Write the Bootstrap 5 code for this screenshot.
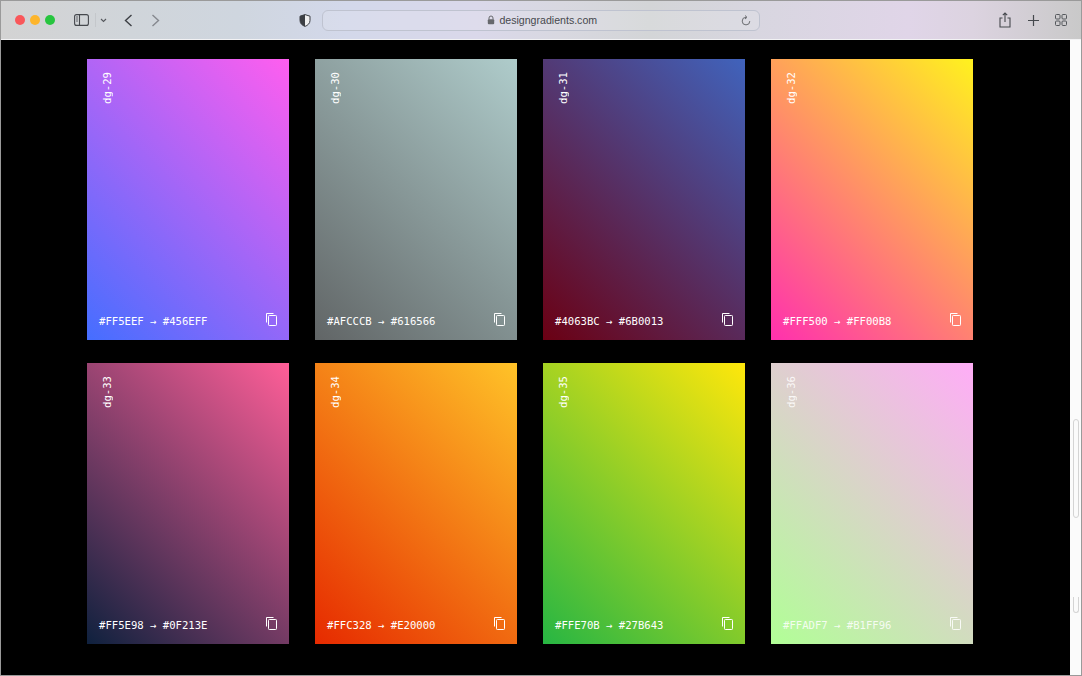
<!DOCTYPE html>
<html lang="en">
<head>
<meta charset="utf-8">
<title>designgradients.com</title>
<link href="https://cdn.jsdelivr.net/npm/bootstrap@5.3.0/dist/css/bootstrap.min.css" rel="stylesheet">
<style>
html,body{height:100%;margin:0;overflow:hidden;background:#fff}
.win{width:1082px;height:676px;border:1px solid #9a9a9a;display:flex;flex-direction:column;overflow:hidden;background:#fbfbfb}
.tb{height:39px;flex:none;border-bottom:1px solid #f2f2f4;background:linear-gradient(90deg,#d3d3d3 0,#d0d5da 12%,#cfd6df 22%,#d3d8ea 32%,#dad8ea 44%,#d8d8e0 52%,#d3d5d7 60%,#d8d6e0 70%,#e0d5e8 84%,#dcd3e0 90%,#c9c9c9 100%);color:#3c3f44}
.lights{display:flex;gap:5.2px;margin-left:14px}
.dot{width:10px;height:10px;border-radius:50%}
.d1{background:#f9575a}.d2{background:#fdb52c}.d3{background:#27c53f}
.i-side{margin-left:19px}
.sep{width:1px;height:14px;background:#c4c7cb;margin-left:6px}
.i-chev{margin-left:4px}
.i-back{margin-left:17px}
.i-fwd{margin-left:18px}
.i-shield{margin-left:139px}
.addr{width:438px;height:21px;margin-left:11px;border:1px solid #bfc3d0;border-radius:6px;background:rgba(255,255,255,.12);font:10.6px "Liberation Sans",Arial,sans-serif;color:#47494d;padding-left:164px}
.i-share{margin-left:239px}
.i-plus{margin-left:17px}
.i-grid{margin-left:16px}
.mainarea{flex:1;min-height:0}
.pagecv{flex:1;background:#000;padding:19px 0 0 86px}
.gridcv{display:grid;grid-template-columns:repeat(4,202px);grid-auto-rows:281px;column-gap:26px;row-gap:23px}
.sw{padding:13px 12px 13px 12px;color:#fff;font:10.6px "DejaVu Sans Mono","Liberation Mono",monospace}
.sw.faded{color:rgba(255,255,255,.85)}
.vt{writing-mode:vertical-rl;transform:rotate(180deg);align-self:flex-start;line-height:14px;margin-left:1px}
.cpy{margin-bottom:1px}
.sbar{width:11px;flex:none;background:#fbfbfb;padding-left:3px}
.thumb{width:6px;border:1px solid #d4d4d4;border-radius:3px}
.t1{height:99px;margin-top:379px}
.t2{height:16px;margin-top:79px;border-top:0;border-radius:0 0 3px 3px}
svg{display:block;flex:none}
</style>
</head>
<body>
<div class="win">
  <div class="tb d-flex align-items-center">
    <div class="lights"><span class="dot d1"></span><span class="dot d2"></span><span class="dot d3"></span></div>
    <svg class="i-side" width="15" height="12" viewBox="0 0 15 12" fill="none" stroke="#45484d" stroke-width="1.1"><rect x=".6" y=".6" width="13.800" height="10.800" rx="2"/><path d="M5.500 .6v10.800"/><path d="M2 3h2M2 5h2M2 7h2" stroke-width=".8"/></svg>
    <span class="sep"></span>
    <svg class="i-chev" width="7" height="5" viewBox="0 0 7 5" fill="none" stroke="#55585d" stroke-width="1.1"><path d="M1 1l2.500 2.500L6 1"/></svg>
    <svg class="i-back" width="9" height="13" viewBox="0 0 9 13" fill="none" stroke="#3c3f44" stroke-width="1.4"><path d="M7.500 1L1.500 6.500l6 5.500"/></svg>
    <svg class="i-fwd" width="9" height="13" viewBox="0 0 9 13" fill="none" stroke="#85888e" stroke-width="1.4"><path d="M1.500 1l6 5.500-6 5.500"/></svg>
    <svg class="i-shield" width="12" height="13" viewBox="0 0 12 13"><path d="M6 .6l5 1.600v4.300c0 3-2.300 4.900-5 5.900-2.700-1-5-2.900-5-5.900V2.200z" fill="#f0f0f0" stroke="#3c3f44" stroke-width="1"/><path d="M6 .6L1 2.200v4.300c0 3 2.300 4.900 5 5.900z" fill="#3c3f44"/></svg>
    <div class="addr d-flex align-items-center">
      <svg width="8" height="10" viewBox="0 0 8 10" class="me-1"><path d="M2 4.500V3a2 2 0 0 1 4 0v1.500" fill="none" stroke="#66686c" stroke-width="1"/><rect x=".8" y="4.300" width="6.400" height="5" rx="1" fill="#66686c"/></svg>
      <span>designgradients.com</span>
      <svg class="ms-auto me-2" width="10" height="11" viewBox="0 0 10 11" fill="none" stroke="#6a6c70" stroke-width="1"><path d="M5 2.300a3.800 3.800 0 1 0 3.800 3.800"/><path d="M4 .5l2 1.800-2 1.700" /></svg>
    </div>
    <svg class="i-share" width="12" height="16" viewBox="0 0 12 16" fill="none" stroke="#45484d" stroke-width="1.100"><path d="M3.500 6H1v9h10V6H8.500"/><path d="M6 10V1M3.800 3.200L6 1l2.200 2.200"/></svg>
    <svg class="i-plus" width="11" height="11" viewBox="0 0 11 11" fill="none" stroke="#45484d" stroke-width="1.200"><path d="M5.500 0v11M0 5.500h11"/></svg>
    <svg class="i-grid" width="12" height="12" viewBox="0 0 12 12" fill="none" stroke="#55585d" stroke-width="1"><rect x=".5" y=".5" width="4.500" height="4.500" rx="1"/><rect x="7" y=".5" width="4.500" height="4.500" rx="1"/><rect x=".5" y="7" width="4.500" height="4.500" rx="1"/><rect x="7" y="7" width="4.500" height="4.500" rx="1"/></svg>
  </div>
  <div class="mainarea d-flex">
    <div class="pagecv">
      <div class="gridcv">
        <div class="sw d-flex flex-column justify-content-between" style="background:linear-gradient(225deg,#FF5EEF,#456EFF)"><div class="vt">dg-29</div><div class="d-flex justify-content-between align-items-end"><span>#FF5EEF → #456EFF</span><svg class="cpy" width="12" height="13" viewBox="0 0 12 13" fill="none" stroke="currentColor"><path d="M8.500.5H1.500v9"/><rect x="3.500" y="2.500" width="8" height="10" rx=".8"/></svg></div></div>
        <div class="sw d-flex flex-column justify-content-between" style="background:linear-gradient(225deg,#AFCCCB,#616566)"><div class="vt">dg-30</div><div class="d-flex justify-content-between align-items-end"><span>#AFCCCB → #616566</span><svg class="cpy" width="12" height="13" viewBox="0 0 12 13" fill="none" stroke="currentColor"><path d="M8.500.5H1.500v9"/><rect x="3.500" y="2.500" width="8" height="10" rx=".8"/></svg></div></div>
        <div class="sw d-flex flex-column justify-content-between" style="background:linear-gradient(225deg,#4063BC,#6B0013)"><div class="vt">dg-31</div><div class="d-flex justify-content-between align-items-end"><span>#4063BC → #6B0013</span><svg class="cpy" width="12" height="13" viewBox="0 0 12 13" fill="none" stroke="currentColor"><path d="M8.500.5H1.500v9"/><rect x="3.500" y="2.500" width="8" height="10" rx=".8"/></svg></div></div>
        <div class="sw d-flex flex-column justify-content-between" style="background:linear-gradient(225deg,#FFF21E,#FF30AE)"><div class="vt">dg-32</div><div class="d-flex justify-content-between align-items-end"><span>#FFF500 → #FF00B8</span><svg class="cpy" width="12" height="13" viewBox="0 0 12 13" fill="none" stroke="currentColor"><path d="M8.500.5H1.500v9"/><rect x="3.500" y="2.500" width="8" height="10" rx=".8"/></svg></div></div>
        <div class="sw d-flex flex-column justify-content-between" style="background:linear-gradient(225deg,#FF5E98,#0F213E)"><div class="vt">dg-33</div><div class="d-flex justify-content-between align-items-end"><span>#FF5E98 → #0F213E</span><svg class="cpy" width="12" height="13" viewBox="0 0 12 13" fill="none" stroke="currentColor"><path d="M8.500.5H1.500v9"/><rect x="3.500" y="2.500" width="8" height="10" rx=".8"/></svg></div></div>
        <div class="sw d-flex flex-column justify-content-between" style="background:linear-gradient(225deg,#FFC328,#E62A00)"><div class="vt">dg-34</div><div class="d-flex justify-content-between align-items-end"><span>#FFC328 → #E20000</span><svg class="cpy" width="12" height="13" viewBox="0 0 12 13" fill="none" stroke="currentColor"><path d="M8.500.5H1.500v9"/><rect x="3.500" y="2.500" width="8" height="10" rx=".8"/></svg></div></div>
        <div class="sw d-flex flex-column justify-content-between" style="background:linear-gradient(225deg,#FFE70B,#27B643)"><div class="vt">dg-35</div><div class="d-flex justify-content-between align-items-end"><span>#FFE70B → #27B643</span><svg class="cpy" width="12" height="13" viewBox="0 0 12 13" fill="none" stroke="currentColor"><path d="M8.500.5H1.500v9"/><rect x="3.500" y="2.500" width="8" height="10" rx=".8"/></svg></div></div>
        <div class="sw faded d-flex flex-column justify-content-between" style="background:linear-gradient(225deg,#FFADF7,#B1FF96)"><div class="vt">dg-36</div><div class="d-flex justify-content-between align-items-end"><span>#FFADF7 → #B1FF96</span><svg class="cpy" width="12" height="13" viewBox="0 0 12 13" fill="none" stroke="currentColor"><path d="M8.500.5H1.500v9"/><rect x="3.500" y="2.500" width="8" height="10" rx=".8"/></svg></div></div>
      </div>
    </div>
    <div class="sbar"><div class="thumb t1"></div><div class="thumb t2"></div></div>
  </div>
</div>
</body>
</html>
